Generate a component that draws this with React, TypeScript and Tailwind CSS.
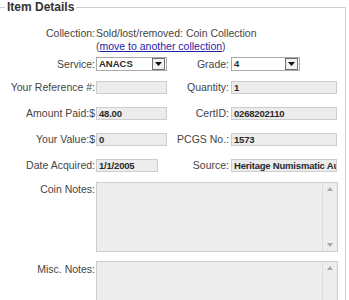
import React from 'react';

const Field = ({ value, w }: { value: string; w: string }) => (
  <div
    className={`${w} h-[13px] bg-[#ececec] border border-[#cdcdcd] pl-[2px] text-[9.5px] font-bold tracking-[-0.2px] leading-[11px] text-[#2a2a2a] overflow-hidden whitespace-nowrap`}
  >
    {value}
  </div>
);

const Select = ({ value, w }: { value: string; w: string }) => (
  <div className={`${w} h-[14px] bg-white border border-[#a9a9a9] flex items-center`}>
    <span className="flex-1 pl-[2px] text-[9.5px] font-bold leading-[12px] text-[#2a2a2a]">{value}</span>
    <span className="w-[13px] h-[12px] mr-[1px] border border-[#6f6f6f] bg-[#f0f0f0] flex items-center justify-center">
      <svg width="7" height="4" viewBox="0 0 7 4">
        <path d="M0 0h7L3.5 4z" fill="#111" />
      </svg>
    </span>
  </div>
);

const Label = ({ children, w }: { children: React.ReactNode; w: string }) => (
  <div className={`${w} text-right text-[10.5px] leading-[13px] text-[#444] whitespace-nowrap`}>{children}</div>
);

const NotesBox = () => (
  <div className="w-[242px] h-[70px] bg-[#ededed] border border-[#cdcdcd] flex">
    <div className="flex-1" />
    <div className="w-[15px] border-l border-[#dcdcdc] flex flex-col items-center justify-between py-[4px]">
      <svg width="6" height="4" viewBox="0 0 6 4">
        <path d="M0 4h6L3 0z" fill="#a8a8a8" />
      </svg>
      <svg width="6" height="4" viewBox="0 0 6 4">
        <path d="M0 0h6L3 4z" fill="#a8a8a8" />
      </svg>
    </div>
  </div>
);

export default function App() {
  const rows = [
    { l: 'Your Reference #:', v: '', r: 'Quantity:', rv: '1' },
    { l: 'Amount Paid:$', v: '48.00', r: 'CertID:', rv: '0268202110' },
    { l: 'Your Value:$', v: '0', r: 'PCGS No.:', rv: '1573' },
  ];

  return (
    <div className="w-[349px] h-[300px] bg-white overflow-hidden" style={{ fontFamily: '"Liberation Sans", Arial, sans-serif' }}>
      <fieldset className="w-[346px] h-[320px] border-t border-r border-[#cfcfcf]">
        <legend className="ml-[5px] px-[2px] text-[12px] font-bold leading-[15px] text-[#333]">Item Details</legend>

        <div className="mt-[12px] flex">
          <Label w="w-[95px]">Collection:</Label>
          <div className="pl-[1px] text-[10.5px] leading-[12px] text-[#444]">
            <div className="leading-[13px]">Sold/lost/removed: Coin Collection</div>
            <div>
              (<a href="#" className="text-[#2323a8] underline">move to another collection</a>)
            </div>
          </div>
        </div>

        <div className="mt-[5px] flex items-center">
          <Label w="w-[95px]">Service:</Label>
          <div className="ml-[1px]">
            <Select value="ANACS" w="w-[71px]" />
          </div>
          <Label w="w-[62px]">Grade:</Label>
          <div className="ml-[2px]">
            <Select value="4" w="w-[69px]" />
          </div>
        </div>

        {rows.map((row, i) => (
          <div key={i} className={`${i === 0 ? 'mt-[10px]' : 'mt-[13px]'} flex items-center`}>
            <Label w="w-[95px]">{row.l}</Label>
            <div className="ml-[1px]">
              <Field value={row.v} w="w-[71px]" />
            </div>
            <Label w="w-[62px]">{row.r}</Label>
            <div className="ml-[2px]">
              <Field value={row.rv} w="w-[106px]" />
            </div>
          </div>
        ))}

        <div className="mt-[13px] flex items-center">
          <Label w="w-[95px]">Date Acquired:</Label>
          <div className="ml-[1px]">
            <Field value="1/1/2005" w="w-[62px]" />
          </div>
          <Label w="w-[71px]">Source:</Label>
          <div className="ml-[2px]">
            <Field value="Heritage Numismatic Au" w="w-[106px]" />
          </div>
        </div>

        <div className="mt-[10px] flex items-start">
          <Label w="w-[95px]">
            <div className="pt-[1px]">Coin Notes:</div>
          </Label>
          <div className="ml-[1px]">
            <NotesBox />
          </div>
        </div>

        <div className="mt-[9px] flex items-start">
          <Label w="w-[95px]">
            <div className="pt-[2px]">Misc. Notes:</div>
          </Label>
          <div className="ml-[1px]">
            <NotesBox />
          </div>
        </div>
      </fieldset>
    </div>
  );
}
